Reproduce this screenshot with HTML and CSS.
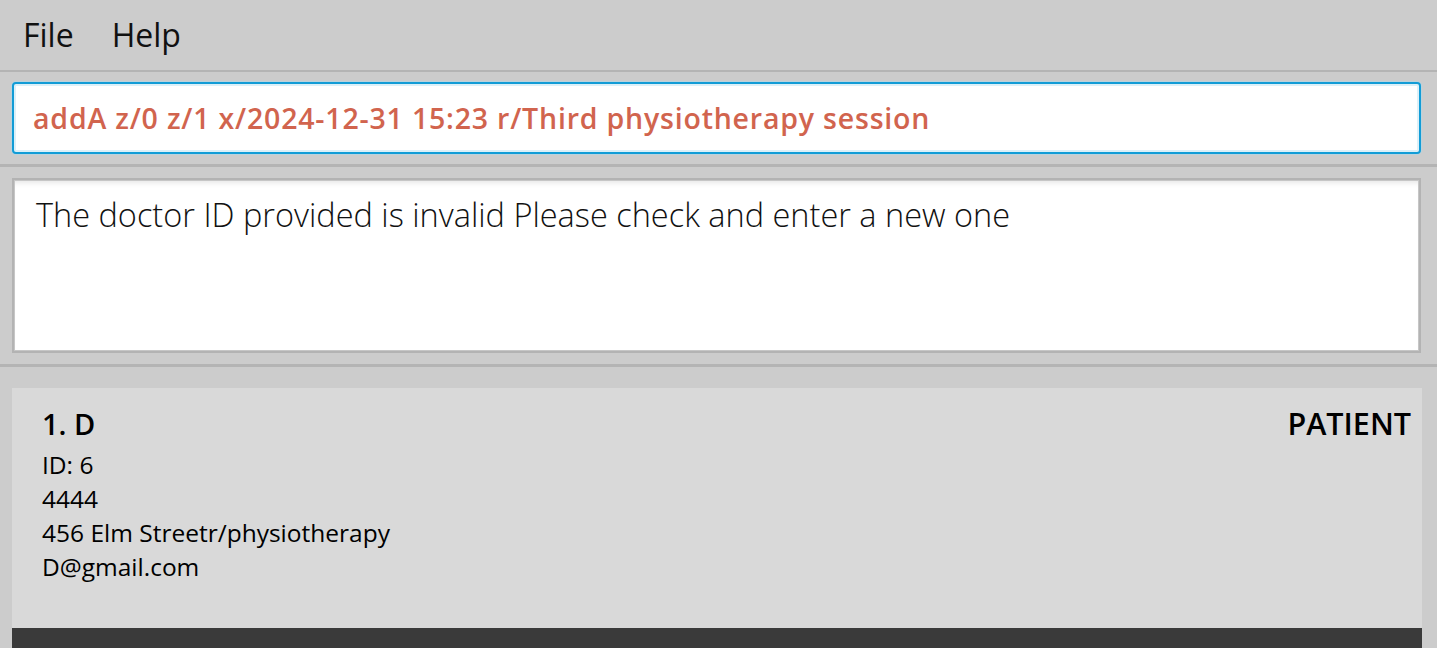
FILE: index.html
```html
<!DOCTYPE html>
<html lang="en">
<head>
<meta charset="utf-8">
<title>App</title>
<link rel="stylesheet" href="styles.css">
</head>
<body>
<div class="app">
  <nav class="menubar">
    <span class="menu-item">File</span>
    <span class="menu-item">Help</span>
  </nav>
  <section class="command-pane">
    <div class="command-field">addA z/0 z/1 x/2024-12-31 15:23 r/Third physiotherapy session</div>
  </section>
  <section class="result-pane">
    <div class="result-box">The doctor ID provided is invalid Please check and enter a new one</div>
  </section>
  <section class="list-pane">
    <div class="list-view">
      <div class="card">
        <div class="card-head">
          <span class="card-name">1. D</span>
          <span class="card-tag">PATIENT</span>
        </div>
        <div class="card-line">ID: 6</div>
        <div class="card-line">4444</div>
        <div class="card-line">456 Elm Streetr/physiotherapy</div>
        <div class="card-line">D@gmail.com</div>
      </div>
    </div>
  </section>
</div>
</body>
</html>
```

FILE: styles.css
```css
* { box-sizing: border-box; }
html, body {
  margin: 0;
  padding: 0;
  height: 648px;
  overflow: hidden;
  background: #cccccc;
  font-family: "Open Sans", "Noto Sans", sans-serif;
}
.app {
  display: flex;
  flex-direction: column;
  height: 648px;
}
.menubar {
  height: 72px;
  display: flex;
  gap: 38px;
  padding-left: 23px;
  border-bottom: 2px solid #b4b4b4;
  background: #cccccc;
  flex: none;
}
.menu-item {
  font-size: 32px;
  line-height: 70px;
  color: #111;
}
.command-pane {
  flex: none;
  padding: 10px 16px 10px 12px;
  border-bottom: 3px solid #b4b4b4;
}
.command-field {
  height: 72px;
  border: 2px solid #129cd6;
  border-radius: 4px;
  background: #ffffff;
  box-shadow: inset 0 0 0 2px #dcf0f8, 0 0 0 1px #b9d3de;
  color: #d1644e;
  font-size: 28.5px;
  letter-spacing: 0.8px;
  font-weight: 600;
  display: flex;
  align-items: center;
  padding-left: 19px;
  white-space: nowrap;
}
.result-pane {
  flex: none;
  padding: 11px 16px 11px 12px;
  border-bottom: 3px solid #b4b4b4;
}
.result-box {
  height: 175px;
  border: 2px solid #b3b3b3;
  background: #ffffff;
  box-shadow: inset 0 0 0 1px #c6c6c6, inset 0 6px 6px -4px #e0e0e0;
  padding: 12px 22px;
  font-size: 32.5px;
  font-weight: 300;
  color: #111;
  white-space: nowrap;
}
.list-pane {
  flex: 1;
  padding: 21px 15px 0 12px;
  display: flex;
  flex-direction: column;
}
.list-view {
  flex: 1;
  background: #3a3a3a;
}
.card {
  height: 240px;
  background: #d9d9d9;
  padding: 17px 11px 0 30px;
  color: #000;
}
.card-head {
  display: flex;
  justify-content: space-between;
  align-items: baseline;
  height: 43px;
}
.card-name {
  font-size: 29px;
  font-weight: 600;
  line-height: 36px;
}
.card-tag {
  font-size: 30.5px;
  font-weight: 600;
  line-height: 36px;
}
.card-line {
  font-size: 24.5px;
  line-height: 34px;
}
```
